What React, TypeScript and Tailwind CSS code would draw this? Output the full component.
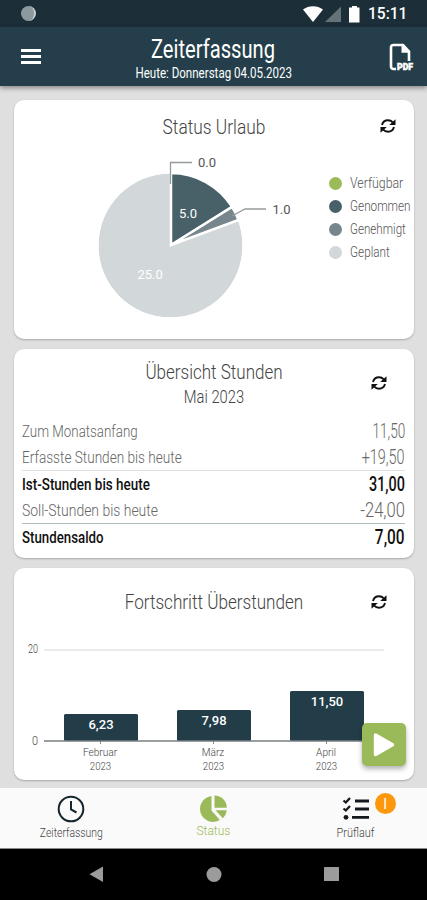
import type { ReactNode } from "react";

type PieLegendItem = {
	label: string;
	dotClass: string;
	textClass: string;
};

type HourRow = {
	label: string;
	value: string;
	rowClass: string;
	labelClass: string;
	valueClass: string;
};

const legend: PieLegendItem[] = [
	{ label: "Verfügbar", dotClass: "bg-[#9bbb58]", textClass: "scale-x-[0.88]" },
	{ label: "Genommen", dotClass: "bg-[#486067]", textClass: "scale-x-[0.84]" },
	{ label: "Genehmigt", dotClass: "bg-[#76868c]", textClass: "scale-x-[0.83]" },
	{ label: "Geplant", dotClass: "bg-[#d2d8da]", textClass: "scale-x-[0.84]" },
];

const hours: HourRow[] = [
	{
		label: "Zum Monatsanfang",
		value: "11,50",
		rowClass: "font-light text-[#666]",
		labelClass: "scale-x-[0.785]",
		valueClass: "scale-x-[0.68]",
	},
	{
		label: "Erfasste Stunden bis heute",
		value: "+19,50",
		rowClass: "font-light text-[#666]",
		labelClass: "scale-x-[0.8]",
		valueClass: "scale-x-[0.72]",
	},
	{
		label: "Ist-Stunden bis heute",
		value: "31,00",
		rowClass: "border-t border-[#dde1e1] font-medium text-[#111]",
		labelClass: "scale-x-[0.79]",
		valueClass: "scale-x-[0.72]",
	},
	{
		label: "Soll-Stunden bis heute",
		value: "-24,00",
		rowClass: "font-light text-[#666]",
		labelClass: "scale-x-[0.82]",
		valueClass: "scale-x-[0.83]",
	},
	{
		label: "Stundensaldo",
		value: "7,00",
		rowClass: "border-t border-[#b4bdbe] font-medium text-[#111]",
		labelClass: "scale-x-[0.78]",
		valueClass: "scale-x-[0.77]",
	},
];

const bars = [
	{ month: "Februar", label: "6,23", x: 50, top: 86 },
	{ month: "März", label: "7,98", x: 163, top: 82 },
	{ month: "April", label: "11,50", x: 276, top: 63 },
];

function Card({ className, children }: { className: string; children: ReactNode }) {
	return (
		<section
			className={`relative w-[400px] shrink-0 rounded-[10px] bg-white shadow-[0_1px_2px_rgba(0,0,0,0.25)] ${className}`}
		>
			{children}
		</section>
	);
}

function RefreshButton({ className }: { className: string }) {
	return (
		<button type="button" aria-label="Aktualisieren" className={`absolute ${className}`}>
			<svg width="16" height="16" viewBox="0 0 16 16" fill="none" stroke="#111" strokeWidth="1.9">
				<path d="M2 7C2.800 4 5.200 2.300 8 2.300c2 0 3.600.7 4.800 2" />
				<path d="M14 9C13.200 12 10.800 13.700 8 13.700c-2 0-3.600-.7-4.800-2" />
				<path d="M15.500 1.200v5.800H9.200z" fill="#111" stroke="none" />
				<path d="M.5 14.800V9h6.300z" fill="#111" stroke="none" />
			</svg>
		</button>
	);
}

function StatusBar() {
	return (
		<div className="flex h-[27px] items-center bg-[#1c2f38] pl-[21px] pr-[17px]">
			<span className="h-[15px] w-[15px] rounded-full border-r-2 border-[#c8cfd2] bg-[#8c999e]" />
			<svg className="ml-auto" width="61" height="20" viewBox="0 0 61 20">
				<path d="M0 5.500C5.500 1 14.500 1 20 5.500L10 18z" fill="#fff" />
				<path d="M38 2.500V18H22z" fill="#64737a" />
				<path d="M47 3.500h2V2h5v1.500h2.500V18.500H46V3.500z" fill="#fff" />
			</svg>
			<span className="ml-[4px] w-[42px] whitespace-nowrap text-[16px] font-medium leading-[27px] text-white">
				<span className="inline-block origin-left scale-x-[0.97]">15:11</span>
			</span>
		</div>
	);
}

function Header() {
	return (
		<header className="relative z-10 flex h-[59px] justify-center bg-[#243f4b] shadow-[0_2px_5px_rgba(0,0,0,0.4)]">
			<button type="button" aria-label="Menü" className="absolute left-[21px] top-[22px] flex flex-col gap-[3px]">
				<span className="h-[3px] w-5 bg-white" />
				<span className="h-[3px] w-5 bg-white" />
				<span className="h-[3px] w-5 bg-white" />
			</button>
			<div className="flex flex-col items-center whitespace-nowrap pt-[8px] text-white">
				<h1 className="scale-x-[0.775] text-[26px] leading-[28px]">Zeiterfassung</h1>
				<p className="scale-x-[0.77] text-[15px] leading-[20px]">Heute: Donnerstag 04.05.2023</p>
			</div>
			<button type="button" aria-label="PDF" className="absolute left-[389px] top-[16px]">
				<svg width="26" height="29" viewBox="0 0 26 29" fill="none" stroke="#fff" strokeWidth="2.600">
					<path d="M7 26H4.500A2.500 2.500 0 0 1 2 23.500V4.500A2.500 2.500 0 0 1 4.500 2H14l6 6.500V18" />
					<path d="M12.500 1.500v8.300h8.300z" fill="#fff" stroke="none" />
					<text x="8" y="27" fill="#fff" stroke="#fff" strokeWidth=".5" fontSize="9" fontWeight="900" textLength="16" lengthAdjust="spacingAndGlyphs">
						PDF
					</text>
				</svg>
			</button>
		</header>
	);
}

function VacationCard() {
	return (
		<Card className="h-[239px] pt-[13px]">
			<h2 className="scale-x-[0.825] text-center text-[21px] font-light leading-[28px] text-[#444]">Status Urlaub</h2>
			<RefreshButton className="left-[366px] top-[18px]" />
			<div className="flex">
				<svg className="shrink-0" width="310" height="198" viewBox="0 0 310 198">
					<circle cx="156.500" cy="104.500" r="72" fill="#d2d8da" />
					<g stroke="#fff" strokeWidth="2.500">
						<path d="M157 104V32a72 72 0 0 1 61.100 33.900z" fill="#486067" />
						<path d="M157 104 218.100 65.900A72 72 0 0 1 224.500 79z" fill="#76868c" />
					</g>
					<circle cx="156.500" cy="104.500" r="73" fill="none" stroke="#fff" strokeWidth="2" />
					<path d="M156.500 43V21.500H178" fill="none" stroke="#959a9c" strokeWidth="1.300" />
					<path d="M218 75 231 68H252" fill="none" stroke="#959a9c" strokeWidth="1.300" />
					<g fontSize="13" fill="#555">
						<text x="184" y="25.500">0.0</text>
						<text x="258.500" y="72.500">1.0</text>
						<text x="165" y="76.500" fill="#fff">5.0</text>
						<text x="123.500" y="137.500" fill="#fff">25.0</text>
					</g>
				</svg>
				<ul className="flex flex-col pl-[5px] pt-[31px]">
					{legend.map((item) => (
						<li key={item.label} className="flex h-[23px] w-[80px] items-center gap-2">
							<span className={`h-[13px] w-[13px] shrink-0 rounded-full ${item.dotClass}`} />
							<span className={`origin-left text-[14px] font-light text-[#555] ${item.textClass}`}>{item.label}</span>
						</li>
					))}
				</ul>
			</div>
		</Card>
	);
}

function HoursCard() {
	return (
		<Card className="h-[209px] px-2 pt-[9px]">
			<RefreshButton className="left-[357px] top-[26px]" />
			<h2 className="scale-x-[0.81] text-center text-[21px] font-light leading-[28px] text-[#444]">Übersicht Stunden</h2>
			<p className="scale-x-[0.82] text-center text-[18px] font-light leading-[22px] text-[#444]">Mai 2023</p>
			<dl className="mr-[1px] mt-[10px] whitespace-nowrap">
				{hours.map((row) => (
					<div key={row.label} className={`flex justify-between leading-[26px] ${row.rowClass}`}>
						<dt className={`origin-left text-[17px] ${row.labelClass}`}>{row.label}</dt>
						<dd className={`origin-right text-[20px] ${row.valueClass}`}>{row.value}</dd>
					</div>
				))}
			</dl>
		</Card>
	);
}

function OvertimeCard() {
	return (
		<Card className="h-[212px] pt-[20px]">
			<RefreshButton className="left-[357px] top-[26px]" />
			<h2 className="scale-x-[0.815] text-center text-[21px] font-light leading-[28px] text-[#444]">
				Fortschritt Überstunden
			</h2>
			<svg className="mt-[12px]" width="400" height="152" viewBox="0 0 400 152">
				<path d="M30 22H370" stroke="#e4e4e4" strokeWidth="1.500" />
				<g fontSize="12" fontWeight="300" fill="#444">
					<text x="14" y="25" textLength="10" lengthAdjust="spacingAndGlyphs">20</text>
					<text x="18" y="116.500" textLength="6" lengthAdjust="spacingAndGlyphs">0</text>
				</g>
				{bars.map((bar) => (
					<g key={bar.month} textAnchor="middle">
						<rect x={bar.x} y={bar.top} width="74" height={113 - bar.top} rx="1.500" fill="#223c48" />
						<path d={`M${bar.x + 36.5} 113v3`} stroke="#888" />
						<text x={bar.x + 37} y={bar.top + 15} fontSize="13" fontWeight="500" fill="#fff">
							{bar.label}
						</text>
						<g fontSize="11.500" fontWeight="300" fill="#444">
							<text transform={`translate(${bar.x + 36} 128) scale(.88 1)`}>{bar.month}</text>
							<text transform={`translate(${bar.x + 36.5} 142) scale(.84 1)`}>2023</text>
						</g>
					</g>
				))}
				<path d="M30 113H370" stroke="#777f82" strokeWidth="1.300" />
			</svg>
			<button
				type="button"
				aria-label="Start"
				className="absolute left-[348px] top-[155px] flex h-[43px] w-[44px] items-center justify-center rounded-[5px] bg-[#9aba59] shadow-[0_3px_5px_rgba(0,0,0,0.3)]"
			>
				<svg width="22" height="26" viewBox="0 0 22 26">
					<path d="M2.500 3v19.500L19.500 12.800z" fill="#fff" stroke="#fff" strokeWidth="3.400" strokeLinejoin="round" />
				</svg>
			</button>
		</Card>
	);
}

function TabBar() {
	return (
		<nav className="flex h-[61px] border-b border-[#8b8b8b] bg-[#fafafa] text-[13px] font-light leading-[16px] text-[#444]">
			<div className="flex flex-1 flex-col items-center pt-[7px]">
				<svg width="28" height="28" viewBox="0 0 28 28" fill="none" stroke="#14252e" strokeWidth="2">
					<circle cx="14" cy="14" r="12.300" />
					<path d="M14 6v8.500l5.500 3" />
				</svg>
				<span className="mt-[1px] scale-x-[0.8] leading-[17px]">Zeiterfassung</span>
			</div>
			<div className="flex flex-1 flex-col items-center pt-[7px] text-[#9aba59]">
				<svg width="28" height="28" viewBox="0 0 28 28" fill="currentColor">
					<path d="M12.500 1A13 13 0 1 0 20.800 25L12.500 15.500z" />
					<path d="M15.500.5a12.300 12.300 0 0 1 12.300 12.300H15.500z" />
					<path d="M16.500 15.300h11.300a13 13 0 0 1-4 8z" />
				</svg>
				<span className="-mt-[1px] scale-x-[0.92] leading-[17px]">Status</span>
			</div>
			<div className="relative flex flex-1 flex-col items-center pt-[7px]">
				<svg width="28" height="28" viewBox="0 0 28 28" fill="none" stroke="#14181f" strokeWidth="2.300">
					<path d="M1.500 5.500 3.800 7.500 8 3M1.500 13.500 3.800 15.500 8 11" />
					<path d="M13 6H27M13 14H27M10 22.300H27" strokeWidth="2.800" />
					<circle cx="4" cy="22.300" r="2.400" fill="#14181f" stroke="none" />
				</svg>
				<span className="mt-[1px] scale-x-[0.84] leading-[17px]">Prüflauf</span>
				<span className="absolute left-[90px] top-[5px] flex h-[21px] w-[21px] items-center justify-center rounded-full bg-[#fd970c] text-[14px] font-normal text-white">
					I
				</span>
			</div>
		</nav>
	);
}

function SystemNav() {
	return (
		<div className="h-[51px] bg-black">
			<svg width="427" height="51" viewBox="0 0 427 51" fill="#9b9b9b">
				<path d="M103 17.500V33L89.500 25.300z" />
				<circle cx="214" cy="25.500" r="7.500" />
				<rect x="324" y="18" width="15" height="14" rx=".5" />
			</svg>
		</div>
	);
}

export default function App() {
	return (
		<div className="flex h-[900px] w-[427px] flex-col overflow-hidden bg-[#dfdfdf] font-['Roboto',sans-serif]">
			<StatusBar />
			<Header />
			<main className="flex h-[702px] flex-col gap-[10px] overflow-hidden pl-[14px] pt-[14px]">
				<VacationCard />
				<HoursCard />
				<OvertimeCard />
			</main>
			<TabBar />
			<SystemNav />
		</div>
	);
}
